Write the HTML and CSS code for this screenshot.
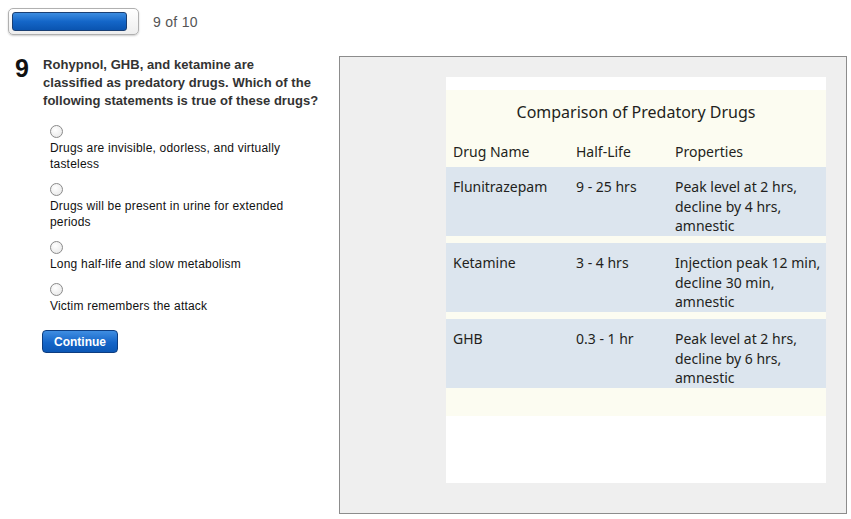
FILE: index.html
```html
<!DOCTYPE html>
<html>
<head>
<meta charset="utf-8">
<link rel="stylesheet" href="styles.css">
</head>
<body>
<div class="top">
  <div class="progress"><div class="progress-fill"></div></div>
  <div class="count">9 of 10</div>
</div>
<div class="main">
  <div class="left">
    <div class="question">
      <div class="qnum">9</div>
      <div class="qtext">Rohypnol, GHB, and ketamine are<br>classified as predatory drugs. Which of the<br>following statements is true of these drugs?</div>
    </div>
    <div class="options">
      <div class="option"><span class="radio"></span><div class="label">Drugs are invisible, odorless, and virtually tasteless</div></div>
      <div class="option"><span class="radio"></span><div class="label">Drugs will be present in urine for extended periods</div></div>
      <div class="option"><span class="radio"></span><div class="label">Long half-life and slow metabolism</div></div>
      <div class="option"><span class="radio"></span><div class="label">Victim remembers the attack</div></div>
    </div>
    <button class="continue">Continue</button>
  </div>
  <div class="panel">
    <div class="figure">
      <div class="fig-head">
        <div class="fig-title">Comparison of Predatory Drugs</div>
        <div class="row head-row">
          <div>Drug Name</div><div>Half-Life</div><div>Properties</div>
        </div>
      </div>
      <div class="row data-row">
        <div>Flunitrazepam</div><div>9 - 25 hrs</div><div>Peak level at 2 hrs, decline by 4 hrs, amnestic</div>
      </div>
      <div class="sep"></div>
      <div class="row data-row">
        <div>Ketamine</div><div>3 - 4 hrs</div><div>Injection peak 12 min, decline 30 min, amnestic</div>
      </div>
      <div class="sep"></div>
      <div class="row data-row">
        <div>GHB</div><div>0.3 - 1 hr</div><div>Peak level at 2 hrs, decline by 6 hrs, amnestic</div>
      </div>
      <div class="fig-foot"></div>
    </div>
  </div>
</div>
</body>
</html>
```

FILE: styles.css
```css
html, body {
  margin: 0;
  padding: 0;
  background: #ffffff;
}
body {
  font-family: "Liberation Sans", Arial, sans-serif;
  color: #1a1a1a;
}
.top {
  display: flex;
  align-items: center;
  gap: 14px;
  padding: 8px 0 0 8px;
  height: 27px;
}
.progress {
  box-sizing: border-box;
  width: 131px;
  height: 27px;
  border: 1px solid #b0b0b0;
  border-radius: 5px;
  background: linear-gradient(#ffffff, #eeeeee);
  box-shadow: 0 1px 2px rgba(0,0,0,0.2);
  padding: 3px 3px;
}
.progress-fill {
  box-sizing: border-box;
  width: 115px;
  height: 19px;
  border: 1px solid #1a3f73;
  border-radius: 3px;
  background: linear-gradient(#3c8ce0, #1466c8 50%, #0a54b0);
}
.count {
  font-size: 14px;
  letter-spacing: 0.3px;
  color: #555555;
}
.main {
  display: flex;
  margin-top: 21px;
}
.left {
  width: 339px;
  flex: none;
}
.question {
  display: flex;
  padding-left: 15px;
}
.qnum {
  width: 28px;
  font-size: 25px;
  font-weight: bold;
  line-height: 24px;
  color: #111;
}
.qtext {
  width: 290px;
  white-space: nowrap;
  font-size: 13px;
  letter-spacing: 0.05px;
  font-weight: bold;
  line-height: 18px;
  color: #333;
}
.options {
  padding-left: 50px;
  margin-top: 14px;
  display: flex;
  flex-direction: column;
  gap: 10px;
}
.option {
  display: flex;
  flex-direction: column;
}
.radio {
  box-sizing: border-box;
  width: 13px;
  height: 13px;
  border: 1px solid #8a8a8a;
  border-radius: 50%;
  background: radial-gradient(circle at 40% 35%, #ffffff, #e4e4e4);
  margin: 1px 0 2px;
}
.label {
  width: 250px;
  font-size: 12px;
  letter-spacing: 0.2px;
  line-height: 16px;
  color: #111;
}
.continue {
  display: block;
  margin: 16px 0 0 42px;
  box-sizing: border-box;
  width: 76px;
  height: 23px;
  border: 1px solid #0d3d80;
  border-radius: 4px;
  background: linear-gradient(#3f8ee2, #1565c8 55%, #0c57b5);
  color: #ffffff;
  font-family: "Liberation Sans", Arial, sans-serif;
  font-size: 12px;
  font-weight: bold;
  padding: 0;
}
.panel {
  box-sizing: border-box;
  width: 508px;
  height: 458px;
  border: 1px solid #8c8c8c;
  background: #efefef;
  padding: 20px 20px 0 106px;
}
.figure {
  width: 380px;
  height: 406px;
  background: #ffffff;
  padding-top: 13px;
  box-sizing: border-box;
  font-family: "Noto Sans", "Open Sans", sans-serif;
  font-size: 14px;
  color: #231f20;
}
.fig-head {
  background: #fcfcf1;
  padding-top: 11px;
  height: 77px;
  box-sizing: border-box;
}
.fig-title {
  text-align: center;
  font-size: 16px;
  line-height: 22px;
}
.row {
  display: grid;
  grid-template-columns: 123px 99px 1fr;
  padding-left: 7px;
}
.head-row {
  margin-top: 19px;
  line-height: 20px;
}
.data-row {
  background: #dce5ee;
  height: 69px;
  box-sizing: border-box;
  padding-top: 10px;
  line-height: 19.5px;
}
.sep {
  height: 7px;
  background: #fcfcf1;
}
.fig-foot {
  height: 28px;
  background: #fcfcf1;
}
```
